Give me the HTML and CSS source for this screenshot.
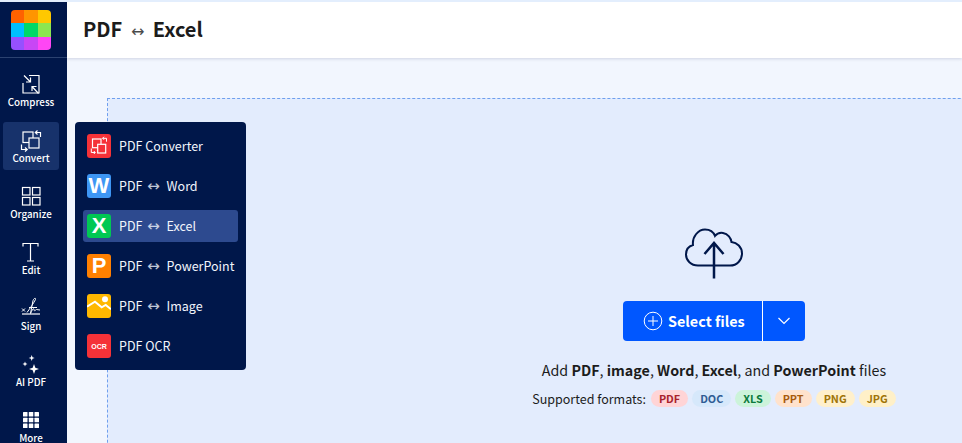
FILE: index.html
```html
<!DOCTYPE html>
<html>
	<head>
		<link rel="stylesheet" href="styles.css">
		<title>PDF to Excel</title>
	</head>
	<body>
		<div class="app">
			<nav class="sidebar">
				<div class="logo-box">
					<div class="logo">
						<span style="background:#ff6200"></span><span style="background:#ff9500"></span><span style="background:#ffc800"></span>
						<span style="background:#00bfff"></span><span style="background:#00d868"></span><span style="background:#8ce650"></span>
						<span style="background:#9650ff"></span><span style="background:#c846f5"></span><span style="background:#ff46f5"></span>
					</div>
				</div>
				<a class="side-item">
					<svg class="side-icon" viewBox="0 0 24 24"><path d="M10 3.500H20V21H4V11" /><path d="M5 3.500L11.500 10M11.500 5.500V10H7" /><path d="M19.500 21.500L13 14.500M13 19V14.500H17.500" /></svg>
					<span>Compress</span>
				</a>
				<a class="side-item active">
					<svg class="side-icon" viewBox="0 0 24 24"><rect x="4" y="4" width="10" height="10.500" /><rect x="10" y="10" width="10" height="10" fill="#17326b" /><path d="M18.500 2.500L16.300 4.500L18.500 6.500M16.500 4.500H21.500V9" /><path d="M2.500 16.500V21.500H8M6 19.500L8.200 21.500L6 23.500" /></svg>
					<span>Convert</span>
				</a>
				<a class="side-item">
					<svg class="side-icon" viewBox="0 0 24 24"><rect x="3.500" y="3.500" width="7.500" height="7.500" /><rect x="13.500" y="3.500" width="7.500" height="7.500" /><rect x="3.500" y="13.500" width="7.500" height="7.500" /><rect x="13.500" y="13.500" width="7.500" height="7.500" /></svg>
					<span>Organize</span>
				</a>
				<a class="side-item">
					<svg class="side-icon" viewBox="0 0 24 24"><path d="M4 6.500V3.500H19V6.500M11.500 3.500V21M8 21H15" /></svg>
					<span>Edit</span>
				</a>
				<a class="side-item">
					<svg class="side-icon" viewBox="0 0 24 24"><path d="M3 18H21" /><g transform="translate(0 -2.500)"><path d="M3 15L6 18M6 15L3 18" stroke-width="1" /><path d="M8 19C11 15 15 9 16.500 6C17 4 15 4.500 14 7C13 11 12.500 16 11.500 20C13 16 15 14 15 16C15 18 16 17 17.500 16L21 16.500M10 14H18" stroke-width="1" /></g></svg>
					<span>Sign</span>
				</a>
				<a class="side-item">
					<svg class="side-icon" viewBox="0 0 24 24"><g class="solid"><path d="M12.700 3L13.500 5.200L15.700 6L13.500 6.800L12.700 9L11.900 6.800L9.700 6L11.900 5.200Z" /><path d="M6 9.500L6.700 11.300L8.500 12L6.700 12.700L6 14.500L5.300 12.700L3.500 12L5.300 11.300Z" /><path d="M15 12L16.300 15.700L20 17L16.300 18.300L15 22L13.700 18.300L10 17L13.700 15.700Z" /></g></svg>
					<span>AI PDF</span>
				</a>
				<a class="side-item">
					<svg class="side-icon" viewBox="0 0 24 24"><g class="solid"><rect x="4" y="4" width="4.500" height="4.500" rx="0.500" /><rect x="9.800" y="4" width="4.500" height="4.500" rx="0.500" /><rect x="15.500" y="4" width="4.500" height="4.500" rx="0.500" /><rect x="4" y="9.800" width="4.500" height="4.500" rx="0.500" /><rect x="9.800" y="9.800" width="4.500" height="4.500" rx="0.500" /><rect x="15.500" y="9.800" width="4.500" height="4.500" rx="0.500" /><rect x="4" y="15.500" width="4.500" height="4.500" rx="0.500" /><rect x="9.800" y="15.500" width="4.500" height="4.500" rx="0.500" /><rect x="15.500" y="15.500" width="4.500" height="4.500" rx="0.500" /></g></svg>
					<span>More</span>
				</a>
			</nav>
			<div class="content">
				<header class="topbar">
					<h1>PDF <span class="arrow">↔</span> Excel</h1>
				</header>
				<main class="main">
					<section class="dropzone">
						<svg class="cloud" viewBox="0 0 58 52">
							<path d="M13 37.500C6 37.500 1 32.500 1 26.500C1 21 4.500 18 8 17C7 9 13 1.500 20 1.500C25 1.500 28.500 4 30 8C32 5.500 35 4.500 38 5C43 5.800 46 10 46.500 14C52 14.500 57 19 57 25.500C57 32 52 37.500 45 37.500Z" />
							<path d="M29 50.500V15.500M19.500 26L29 15L38.500 26" stroke-width="2.500" />
						</svg>
						<div class="select-btn">
							<div class="select-main">
								<svg class="plus" viewBox="0 0 20 20"><circle cx="10" cy="10" r="8.800" /><path d="M10 5V15M5 10H15" /></svg>
								<span class="select-label">Select files</span>
							</div>
							<div class="select-more">
								<svg class="chevron" viewBox="0 0 14 8"><path d="M1.500 1L7 6.500L12.500 1" /></svg>
							</div>
						</div>
						<p class="hint">Add <b>PDF</b>, <b>image</b>, <b>Word</b>, <b>Excel</b>, and <b>PowerPoint</b> files</p>
						<div class="formats">
							<span class="formats-label">Supported formats:</span>
							<span class="pill pill-pdf">PDF</span>
							<span class="pill pill-doc">DOC</span>
							<span class="pill pill-xls">XLS</span>
							<span class="pill pill-ppt">PPT</span>
							<span class="pill pill-png">PNG</span>
							<span class="pill pill-jpg">JPG</span>
						</div>
					</section>
				</main>
			</div>
		</div>
		<div class="menu">
			<a class="menu-item">
				<span class="tile tile-red">
					<svg viewBox="0 0 24 24"><rect x="5.500" y="5" width="8.500" height="8.700" /><rect x="10.700" y="10.300" width="8" height="8.700" fill="#f53238" /><path d="M17 2.800L15.500 4.300L17 5.800M15.700 4.300H19.500V7.700" stroke-width="1" /><path d="M4.300 14.500V18.500H8M6.800 17L8.300 18.500L6.800 20" stroke-width="1" /></svg>
				</span>
				<span class="menu-label">PDF Converter</span>
			</a>
			<a class="menu-item">
				<span class="tile tile-blue">W</span>
				<span class="menu-label">PDF <span class="arrow">↔</span> Word</span>
			</a>
			<a class="menu-item current">
				<span class="tile tile-green">X</span>
				<span class="menu-label">PDF <span class="arrow">↔</span> Excel</span>
			</a>
			<a class="menu-item">
				<span class="tile tile-orange">P</span>
				<span class="menu-label">PDF <span class="arrow">↔</span> PowerPoint</span>
			</a>
			<a class="menu-item">
				<span class="tile tile-yellow">
					<svg viewBox="0 0 24 24"><circle cx="18" cy="5.300" r="3" fill="#fff" stroke="none" /><path d="M0 12.700L8 7.700L14.700 13.300L18.700 11L24 15.300" stroke-width="2" /></svg>
				</span>
				<span class="menu-label">PDF <span class="arrow">↔</span> Image</span>
			</a>
			<a class="menu-item">
				<span class="tile tile-red tile-ocr">OCR</span>
				<span class="menu-label">PDF OCR</span>
			</a>
		</div>
	</body>
</html>
```

FILE: styles.css
```css
html, body {
	margin: 0;
	height: 100%;
	overflow: hidden;
}
body {
	position: relative;
	background-color: #e3eefd;
	font-family: "Noto Sans CJK SC", "Liberation Sans", sans-serif;
	color: #1c1c1c;
}
.app {
	display: flex;
	height: 441px;
	margin-top: 2px;
	overflow: hidden;
}
.sidebar {
	flex: none;
	width: 67px;
	background-color: #00174a;
	display: flex;
	flex-direction: column;
	align-items: flex-start;
}
.logo-box {
	flex: none;
	align-self: stretch;
	height: 47px;
	padding: 8px 0 0 11px;
	border-bottom: 1px solid #2b4270;
	margin-bottom: 8px;
}
.logo {
	width: 40px;
	height: 40px;
	border-radius: 4px;
	overflow: hidden;
	display: grid;
	grid-template-columns: repeat(3, 1fr);
	grid-template-rows: repeat(3, 1fr);
}
.side-item {
	flex: none;
	width: 56px;
	height: 48px;
	margin: 0 0 8px 3px;
	border-radius: 3px;
	display: flex;
	flex-direction: column;
	align-items: center;
	padding-top: 6px;
	box-sizing: border-box;
	color: #fff;
	font-size: 9.8px;
	font-weight: 500;
	line-height: 13px;
}
.side-item.active {
	background-color: #17326b;
}
.side-icon {
	width: 24px;
	height: 24px;
	flex: none;
	fill: none;
	stroke: #fff;
	stroke-width: 1.2;
}
.side-icon .solid {
	fill: #fff;
	stroke: none;
}
.content {
	flex: 1;
	min-width: 0;
	display: flex;
	flex-direction: column;
}
.topbar {
	flex: none;
	height: 56px;
	background-color: #fff;
	box-shadow: 0 1px 3px rgba(0, 23, 74, 0.15);
	display: flex;
	align-items: center;
	padding-left: 16px;
	position: relative;
}
.topbar h1 {
	margin: 0;
	font-size: 20px;
	font-weight: 700;
	line-height: 26px;
	word-spacing: 4px;
}
.arrow {
	font-family: "DejaVu Sans", sans-serif;
	font-weight: 400;
	opacity: 0.8;
}
.topbar .arrow {
	font-size: 16px;
}
.main {
	flex: 1;
	background-color: #f2f6fe;
	padding: 40px 0 0 40px;
	overflow: hidden;
}
.dropzone {
	width: 1214px;
	height: 400px;
	box-sizing: border-box;
	background-color: #e3ecfd;
	border: 1px dashed #6f9fee;
	display: flex;
	flex-direction: column;
	align-items: center;
	padding-top: 129px;
}
.cloud {
	flex: none;
	width: 58px;
	height: 52px;
	fill: none;
	stroke: #00174a;
	stroke-width: 2;
	margin-bottom: 21px;
}
.select-btn {
	flex: none;
	display: flex;
	width: 182px;
	height: 40px;
	border-radius: 4px;
	overflow: hidden;
	background-color: #0057ff;
	color: #fff;
}
.select-main {
	width: 140px;
	box-sizing: border-box;
	padding-left: 20px;
	display: flex;
	align-items: center;
	gap: 5px;
	font-size: 14.4px;
	font-weight: 700;
	border-right: 1px solid #fff;
}
.select-label {
	padding-bottom: 2px;
}
.select-more {
	flex: 1;
	display: flex;
	align-items: center;
	justify-content: center;
}
.plus {
	width: 20px;
	height: 20px;
	fill: none;
	stroke: #fff;
	stroke-width: 1;
}
.chevron {
	width: 14px;
	height: 8px;
	fill: none;
	stroke: #fff;
	stroke-width: 1.2;
}
.hint {
	margin: 18px 0 0;
	font-size: 14.3px;
	line-height: 22px;
}
.formats {
	display: flex;
	align-items: center;
	gap: 4px;
	margin-top: 8px;
	font-size: 12.5px;
}
.formats-label {
	margin-right: 1px;
}
.pill {
	font-size: 10.8px;
	font-weight: 700;
	line-height: 17px;
	padding: 0 8px;
	border-radius: 9px;
}
.pill-pdf { background-color: #ffd4d6; color: #a8222c; }
.pill-doc { background-color: #d6e8fb; color: #2f5c94; }
.pill-xls { background-color: #ccf3da; color: #0b7a3c; }
.pill-ppt { background-color: #ffe2cc; color: #a85a0c; }
.pill-png { background-color: #fff0cc; color: #a07408; }
.pill-jpg { background-color: #fff0c8; color: #a07408; }
.menu {
	position: absolute;
	left: 75px;
	top: 122px;
	width: 171px;
	height: 248px;
	box-sizing: border-box;
	padding: 8px;
	background-color: #00174a;
	border-radius: 4px;
	display: flex;
	flex-direction: column;
	gap: 8px;
}
.menu-item {
	height: 32px;
	display: flex;
	align-items: center;
	gap: 8px;
	padding-left: 4px;
	border-radius: 3px;
	color: #f2f5fc;
	font-size: 12.5px;
	font-weight: 400;
	white-space: nowrap;
}
.menu-label {
	line-height: 18px;
}
.menu-item .arrow {
	font-size: 15px;
	line-height: 14px;
	margin: 0 4px 0 2px;
}
.menu-item.current {
	background-color: #2d4a8f;
}
.tile {
	flex: none;
	width: 24px;
	height: 24px;
	border-radius: 3px;
	overflow: hidden;
	display: flex;
	align-items: center;
	justify-content: center;
	color: #fff;
	font-family: "Liberation Sans", sans-serif;
	font-size: 22px;
	font-weight: 700;
}
.tile svg {
	width: 24px;
	height: 24px;
	fill: none;
	stroke: #fff;
	stroke-width: 1.2;
}
.tile-red { background-color: #f53238; }
.tile-blue { background-color: #3e96f4; }
.tile-green { background-color: #00c853; }
.tile-orange { background-color: #ff8000; }
.tile-yellow { background-color: #ffb800; }
.tile-ocr { font-size: 7px; }
```
